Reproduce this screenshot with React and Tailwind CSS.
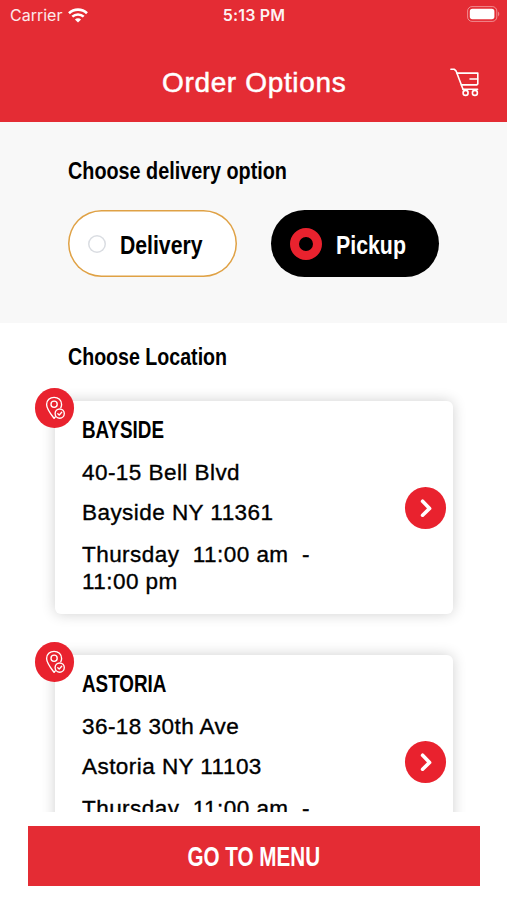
import React from "react";
import clsx from "clsx";

const locations = [
  {
    id: 1,
    name: "BAYSIDE",
    street: "40-15 Bell Blvd",
    city: "Bayside NY 11361",
    hours: ["Thursday  11:00 am  -", "11:00 pm"],
    nameClass: "scale-x-[0.785]",
  },
  {
    id: 2,
    name: "ASTORIA",
    street: "36-18 30th Ave",
    city: "Astoria NY 11103",
    hours: ["Thursday  11:00 am  -"],
    nameClass: "scale-x-[0.785]",
  },
];

// bold condensed label, squeezed horizontally
const Condensed = ({ children, className }) => (
  <span className={clsx("inline-block whitespace-nowrap font-bold", className)}>
    {children}
  </span>
);

const WifiIcon = () => (
  <svg width="20" height="15" viewBox="0 0 20 15" fill="none">
    <path d="M1 5.3A12.9 12.9 0 0 1 19 5.3" stroke="white" strokeWidth="2.6" />
    <path d="M4.3 8.7A8.2 8.2 0 0 1 15.7 8.7" stroke="white" strokeWidth="2.5" />
    <path d="M10 14.6 6.9 11.5A4.4 4.4 0 0 1 13.1 11.5Z" fill="white" />
  </svg>
);

const BatteryIcon = () => (
  <svg width="33" height="16" viewBox="0 0 33 16" fill="none">
    <rect x="0.6" y="0.6" width="29.2" height="14.8" rx="4.4" stroke="white" strokeOpacity="0.45" />
    <rect x="2.8" y="2.8" width="24.6" height="10.4" rx="2.6" fill="white" />
    <path d="M31.2 5.6C32.6 6.4 32.6 9.6 31.2 10.4Z" fill="white" fillOpacity="0.5" />
  </svg>
);

const CartIcon = () => (
  <svg width="30" height="29" viewBox="0 0 30 29" fill="none" stroke="white" strokeWidth="1.6" strokeLinecap="round" strokeLinejoin="round">
    <path d="M0.9 1.3H4.4L6 2.8L13 21.3" />
    <path d="M7 5.1H27.8V15.9L26.8 16.9H11.4" />
    <path d="M20 11H27.6M13 21.3H27.6" />
    <circle cx="15.6" cy="24.9" r="2.5" />
    <circle cx="24.9" cy="24.9" r="2.5" />
  </svg>
);

const PinBadge = () => (
  <div className="absolute -left-5 -top-[13px] flex h-10 w-[39px] items-center justify-center rounded-full bg-[#e9222e]">
    <svg width="20" height="24" viewBox="0 0 20 24" fill="none" stroke="white" strokeWidth="1.35" strokeLinecap="round" strokeLinejoin="round">
      <path d="M15.8 11.6C16.3 10.6 16.6 9.5 16.6 8.4C16.6 4.4 13.3 1.3 9.1 1.3S1.6 4.4 1.6 8.4C1.6 12.7 5.5 17.6 9.1 22.4L10.3 20.9" />
      <circle cx="9.1" cy="8.2" r="3.1" />
      <circle cx="14.7" cy="17.6" r="4.6" />
      <path d="M12.8 17.8L14.2 19.1L16.7 16.2" />
    </svg>
  </div>
);

const LocationCard = ({ location }) => (
  <div className="relative h-[213px] shrink-0 rounded-md bg-white pl-[27px] pt-4 shadow-[0_0_14px_rgba(0,0,0,0.19)]">
    <PinBadge />
    <h3 className="h-[26px] text-[24px] leading-[26px]">
      <Condensed className={clsx("origin-left", location.nameClass)}>
        {location.name}
      </Condensed>
    </h3>
    <div className="whitespace-pre text-[22.5px] leading-[27px] tracking-[0.45px] [-webkit-text-stroke:0.35px]">
      <p className="mt-4">{location.street}</p>
      <p className="mt-[13px]">{location.city}</p>
      <p className="mt-[15px]">{location.hours[0]}</p>
      {location.hours[1] && <p>{location.hours[1]}</p>}
    </div>
    <button className="absolute right-[7px] top-[86px] flex h-[42px] w-[41px] items-center justify-center rounded-full bg-[#e9222e]">
      <svg width="14" height="20" viewBox="0 0 14 20" fill="none" stroke="white" strokeWidth="3.6" strokeLinecap="round" strokeLinejoin="round">
        <path d="M3.6 3.2L10.6 10.4L3.6 17.2" />
      </svg>
    </button>
  </div>
);

const App = () => {
  return (
    <div className="flex h-[900px] w-[507px] flex-col overflow-hidden bg-white font-['Liberation_Sans',Arial,sans-serif] text-black">
      <header className="h-[122px] shrink-0 bg-[#e42c34] text-white">
        <div className="grid h-[30px] grid-cols-3 items-center pl-[10px] pr-[7px] font-['Inter',sans-serif] text-[16px] leading-none">
          <div className="flex items-center gap-[6px]">
            <span className="text-white/90">Carrier</span>
            <WifiIcon />
          </div>
          <span className="-ml-[2px] text-center font-semibold tracking-[0.2px] text-white/95">
            5:13 PM
          </span>
          <div className="flex justify-end pb-[2px]">
            <BatteryIcon />
          </div>
        </div>
        <div className="flex h-[92px] items-center pl-[162px] pr-[27px] pt-[13px]">
          <h1 className="flex-1 pt-px text-[28px] leading-[32px] tracking-[0.65px] [-webkit-text-stroke:0.5px]">
            Order Options
          </h1>
          <CartIcon />
        </div>
      </header>

      <section className="h-[201px] shrink-0 bg-[#f8f8f8] px-[68px] pt-[35px]">
        <h2 className="h-7 text-[24px] leading-7">
          <Condensed className="origin-left scale-x-[0.825]">
            Choose delivery option
          </Condensed>
        </h2>
        <div className="mt-[25px] flex gap-[34px] text-[26px] leading-8">
          <button className="flex h-[67px] w-[169px] items-center rounded-full bg-white pl-5 shadow-[inset_0_0_0_1.5px_#dfa145]">
            <span className="h-[18px] w-[18px] shrink-0 rounded-full shadow-[inset_0_0_0_1.5px_#dadde2]" />
            <Condensed className="ml-[14px] mt-[2px] origin-left scale-x-[0.815]">
              Delivery
            </Condensed>
          </button>
          <button className="flex h-[67px] w-[168px] items-center rounded-full bg-black pl-[19px] text-white">
            <span className="h-8 w-8 shrink-0 rounded-full border-[9px] border-[#e9222e]" />
            <Condensed className="ml-[14px] mt-[2px] origin-left scale-x-[0.82]">
              Pickup
            </Condensed>
          </button>
        </div>
      </section>

      <main className="flex h-[489px] shrink-0 flex-col overflow-hidden pl-[55px] pr-[54px] pt-5">
        <h2 className="ml-[13px] h-7 text-[24px] leading-7">
          <Condensed className="origin-left scale-x-[0.817]">
            Choose Location
          </Condensed>
        </h2>
        <div className="mt-[30px] flex flex-col gap-[41px]">
          {locations.map((location) => (
            <LocationCard key={location.id} location={location} />
          ))}
        </div>
      </main>

      <footer className="pl-7 pr-[27px] pt-[14px]">
        <button className="flex h-[60px] w-full items-center justify-center bg-[#e42c34] text-[27px] leading-8 text-white">
          <Condensed className="mt-px scale-x-[0.765]">GO TO MENU</Condensed>
        </button>
      </footer>
    </div>
  );
};

export default App;
